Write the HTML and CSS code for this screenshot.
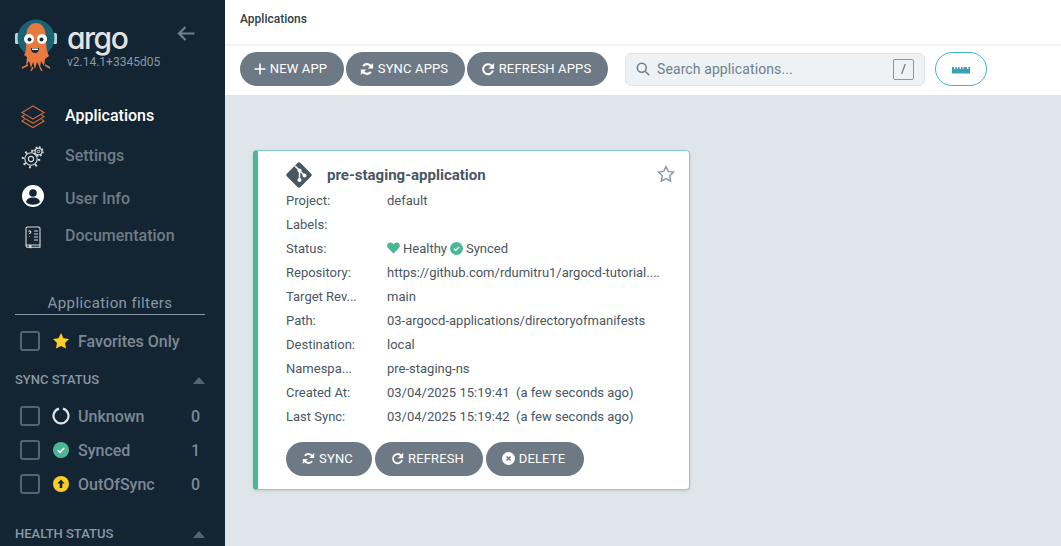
FILE: index.html
```html
<!DOCTYPE html>
<html lang="en">
<head>
  <meta charset="UTF-8" />
  <title>Applications - Argo CD</title>
  <link rel="stylesheet" href="styles.css">
</head>
<body>
  <svg class="sprites" width="0" height="0">
    <symbol id="sync" viewBox="0 0 16 16">
      <path d="M13.200 6.400A5.500 5.500 0 0 0 3.600 4.600" fill="none" stroke="currentColor" stroke-width="2.400"/>
      <path d="M15 1.200v6.200H8.800z" fill="currentColor"/>
      <path d="M2.800 9.600a5.500 5.500 0 0 0 9.600 1.800" fill="none" stroke="currentColor" stroke-width="2.400"/>
      <path d="M1 14.800V8.600h6.200z" fill="currentColor"/>
    </symbol>
    <symbol id="redo" viewBox="0 0 16 16">
      <path d="M12.400 4.400a5.700 5.700 0 1 0 1.200 5.400" fill="none" stroke="currentColor" stroke-width="2.200"/>
      <path d="M15 1v6.600H8.400z" fill="currentColor"/>
    </symbol>
    <symbol id="check" viewBox="0 0 16 16">
      <circle cx="8" cy="8" r="8" fill="#4bb893"/>
      <path d="M4.800 8.200l2.200 2.200 4.200-4.400" fill="none" stroke="#fff" stroke-width="1.600"/>
    </symbol>
  </svg>

  <div class="layout">
    <aside class="sidebar">
      <div class="brand">
        <svg class="logo" width="44" height="52" viewBox="0 0 44 52">
          <rect x="0" y="14" width="4" height="11" rx="1.500" fill="#b5d5e5"/>
          <rect x="38" y="14" width="4" height="11" rx="1.500" fill="#b5d5e5"/>
          <circle cx="21" cy="19" r="18.500" fill="#1b6274"/>
          <path d="M11 20C11 9 15 4 21 4s10 5 10 16c0 8 1 13 3 17l-4 3-1 7-3-5-1 7-3-6-2 7-2-7-2 6-2-7-3 5 1-9-3-2c3-4 2-9 2-16z" fill="#e9793f"/>
          <path d="M13 46l-6 3M30 46l5 3M18 48l-2 4M25 48l2 4" stroke="#e9793f" stroke-width="1.500" fill="none"/>
          <circle cx="14" cy="20" r="5" fill="#fff"/>
          <circle cx="27" cy="20" r="5" fill="#fff"/>
          <circle cx="14.500" cy="20.500" r="2" fill="#1c2b36"/>
          <circle cx="26.500" cy="20.500" r="2" fill="#1c2b36"/>
          <path d="M16 29h8c0 4-2 5-4 5s-4-1-4-5z" fill="#1c2b36"/>
          <path d="M17 29.500h6v1.500h-6z" fill="#fff"/>
        </svg>
        <div class="brand-text">
          <div class="wordmark">argo</div>
          <div class="version">v2.14.1+3345d05</div>
        </div>
        <svg class="collapse" width="18" height="15" viewBox="0 0 18 15">
          <path d="M17.500 7.500H2.500M8.500 1L2 7.500 8.500 14" fill="none" stroke="#6f7e8b" stroke-width="2.200"/>
        </svg>
      </div>

      <nav class="nav">
        <a class="nav-item nav-apps active">
          <svg width="26" height="26" viewBox="0 0 26 26" fill="none" stroke="#c8673a" stroke-width="1.200">
            <path d="M13 2l11 6.500L13 15 2 8.500z"/>
            <path d="M4.500 11L2 12.800 13 19.300l11-6.500L21.500 11"/>
            <path d="M4.500 15.300L2 17.100 13 23.600l11-6.500-2.500-1.800"/>
          </svg>
          <span>Applications</span>
        </a>
        <a class="nav-item nav-settings">
          <svg width="26" height="26" viewBox="0 0 26 26" fill="none" stroke="#d5dade">
            <circle cx="11" cy="15" r="6.200" stroke-width="1.100"/>
            <circle cx="11" cy="15" r="8" stroke-width="2.600" stroke-dasharray="1.800 4.480"/>
            <circle cx="11" cy="15" r="2.600" stroke-width="1.100"/>
            <circle cx="18.500" cy="7.500" r="3.400" fill="#132533" stroke-width="1.100"/>
            <circle cx="18.500" cy="7.500" r="4.400" stroke-width="1.600" stroke-dasharray="1.700 1.750"/>
            <circle cx="18.500" cy="7.500" r="1.300" stroke-width="1"/>
          </svg>
          <span>Settings</span>
        </a>
        <a class="nav-item nav-user">
          <svg width="24" height="24" viewBox="0 0 24 24">
            <circle cx="12" cy="12" r="11" fill="#fff"/>
            <circle cx="12" cy="9" r="3.800" fill="#132533"/>
            <path d="M5 18c1-3.500 3.500-4.500 7-4.500s6 1 7 4.500c-1.500 1.700-4 2.700-7 2.700s-5.500-1-7-2.700z" fill="#132533"/>
          </svg>
          <span>User Info</span>
        </a>
        <a class="nav-item nav-docs">
          <svg width="24" height="24" viewBox="0 0 24 24" fill="none" stroke="#d5dade" stroke-width="1.100">
            <path d="M5 20V3.500C5 2.700 5.700 2 6.500 2h11c.8 0 1.500.7 1.500 1.500V20zM5 20c0 1.500.7 2.300 1.800 2.300H19V20"/>
            <path d="M13 6h4M13 9h4M13 12h4M13 15h4M7.500 6.500c.6-1 2.500-.6 2.300.6-.1.800-1.200.9-1.200 2M8.600 11v.6"/>
            <path d="M8 20v3.500l1.200-.8 1.200.8V20" fill="#d5dade" stroke="none"/>
          </svg>
          <span>Documentation</span>
        </a>
      </nav>

      <section class="filters">
        <div class="filters-title">Application filters</div>
        <label class="filter-row fav-row">
          <span class="checkbox"></span>
          <svg width="18" height="18" viewBox="0 0 18 18"><path d="M9 1l2.500 5.200 5.500.8-4 4 1 5.600L9 14l-5 2.600 1-5.600-4-4 5.500-.8z" fill="#fccd28"/></svg>
          <span class="filter-label">Favorites Only</span>
        </label>

        <div class="filter-head sync-head"><span>SYNC STATUS</span><i class="caret"></i></div>
        <label class="filter-row">
          <span class="checkbox"></span>
          <svg width="18" height="18" viewBox="0 0 18 18"><path d="M7 1.600a7.500 7.500 0 1 0 4 0" fill="none" stroke="#dfe4e8" stroke-width="2.200"/></svg>
          <span class="filter-label">Unknown</span><span class="count">0</span>
        </label>
        <label class="filter-row">
          <span class="checkbox"></span>
          <svg width="16" height="16" class="status-ico"><use href="#check"/></svg>
          <span class="filter-label">Synced</span><span class="count">1</span>
        </label>
        <label class="filter-row">
          <span class="checkbox"></span>
          <svg width="16" height="16" viewBox="0 0 16 16" class="status-ico">
            <circle cx="8" cy="8" r="8" fill="#fccd28"/>
            <path d="M8 3.500l3.600 4H9.300V12H6.700V7.500H4.400z" fill="#132533"/>
          </svg>
          <span class="filter-label">OutOfSync</span><span class="count">0</span>
        </label>

        <div class="filter-head health-head"><span>HEALTH STATUS</span><i class="caret"></i></div>
      </section>
    </aside>

    <main class="main">
      <header class="topbar">Applications</header>
      <div class="toolbar">
        <div class="actions">
          <button class="btn btn-new">
            <svg width="12" height="12" viewBox="0 0 12 12"><path d="M6 .5v11M.5 6h11" stroke="currentColor" stroke-width="1.600"/></svg>
            NEW APP
          </button>
          <button class="btn btn-sync"><svg width="14" height="14"><use href="#sync"/></svg> SYNC APPS</button>
          <button class="btn btn-refresh"><svg width="14" height="14"><use href="#redo"/></svg> REFRESH APPS</button>
        </div>
        <div class="search">
          <svg width="14" height="14" viewBox="0 0 14 14" fill="none" stroke="#6d7f8b" stroke-width="1.500"><circle cx="5.800" cy="5.800" r="4.500"/><path d="M9.200 9.200l4 4"/></svg>
          <span class="search-text">Search applications...</span>
          <kbd class="shortcut">/</kbd>
        </div>
        <button class="view-btn">
          <svg width="18" height="8" viewBox="0 0 18 8"><path d="M0 1h2v2h1.300V1h1.500v1.500h1.300V1h1.500v2h1.300V1h1.500v1.500h1.300V1H15v2h1.300V1H18v6.500H0z" fill="#3f9fb5"/></svg>
        </button>
      </div>

      <div class="content">
        <article class="card">
          <div class="card-head">
            <svg class="git-icon" width="26" height="26" viewBox="0 0 26 26">
              <path d="M11.500 1L1 11.500a2.100 2.100 0 0 0 0 3L11.500 25a2.100 2.100 0 0 0 3 0L25 14.500a2.100 2.100 0 0 0 0-3L14.500 1a2.100 2.100 0 0 0-3 0z" fill="#495763"/>
              <path d="M9 4l4.500 4.500M13.500 8.500v9M13.500 8.500l5 5" stroke="#fff" stroke-width="1.500"/>
              <circle cx="13.500" cy="8.500" r="2" fill="#fff"/><circle cx="13.500" cy="18" r="2" fill="#fff"/><circle cx="18.500" cy="13.500" r="2" fill="#fff"/>
            </svg>
            <h3 class="card-title">pre-staging-application</h3>
            <svg class="star" width="18" height="18" viewBox="0 0 18 18"><path d="M9 1.500l2.300 4.900 5.200.7-3.800 3.700.9 5.300L9 13.500l-4.600 2.600.9-5.300L1.500 7.100l5.200-.7z" fill="none" stroke="#8b9ca8" stroke-width="1.500"/></svg>
          </div>
          <dl class="fields">
            <div class="field"><dt>Project:</dt><dd>default</dd></div>
            <div class="field"><dt>Labels:</dt><dd></dd></div>
            <div class="field"><dt>Status:</dt><dd class="status">
              <svg width="13" height="12" viewBox="0 0 13 12"><path d="M6.500 11.500L1 6C-.500 4.300 0 1.700 2 .800c1.700-.700 3.400 0 4.500 1.500C7.600.800 9.300.100 11 .800c2 .900 2.500 3.500 1 5.200z" fill="#4bb893"/></svg>
              Healthy
              <svg width="13" height="13"><use href="#check"/></svg>
              Synced
            </dd></div>
            <div class="field"><dt>Repository:</dt><dd>https://github.com/rdumitru1/argocd-tutorial....</dd></div>
            <div class="field"><dt>Target Rev...</dt><dd>main</dd></div>
            <div class="field"><dt>Path:</dt><dd>03-argocd-applications/directoryofmanifests</dd></div>
            <div class="field"><dt>Destination:</dt><dd>local</dd></div>
            <div class="field"><dt>Namespa...</dt><dd>pre-staging-ns</dd></div>
            <div class="field"><dt>Created At:</dt><dd>03/04/2025 15:19:41&nbsp; (a few seconds ago)</dd></div>
            <div class="field"><dt>Last Sync:</dt><dd>03/04/2025 15:19:42&nbsp; (a few seconds ago)</dd></div>
          </dl>
          <div class="card-actions">
            <button class="btn btn-card-sync"><svg width="13" height="13"><use href="#sync"/></svg> SYNC</button>
            <button class="btn btn-card-refresh"><svg width="13" height="13"><use href="#redo"/></svg> REFRESH</button>
            <button class="btn btn-card-delete">
              <svg width="13" height="13" viewBox="0 0 13 13"><circle cx="6.500" cy="6.500" r="6.500" fill="#fff"/><path d="M4.500 4.500l4 4M8.500 4.500l-4 4" stroke="#6d7a86" stroke-width="1.500"/></svg>
              DELETE
            </button>
          </div>
        </article>
      </div>
    </main>
  </div>
</body>
</html>
```

FILE: styles.css
```css
* { box-sizing: border-box; }
html, body { height: 100%; }
body { margin: 0; font-family: Roboto, "Liberation Sans", sans-serif; color: #495763; overflow: hidden; }
.sprites { position: absolute; }
.layout { display: flex; height: 546px; overflow: hidden; }

/* sidebar */
.sidebar { width: 225px; flex: none; background: #132533; color: #8b98a3; padding-top: 19px; overflow: hidden; }
.brand { display: flex; padding-left: 15px; height: 68px; }
.logo { flex: none; }
.brand-text { margin-left: 8px; width: 110px; flex: none; }
.wordmark { font-family: "Inter", sans-serif; font-feature-settings: "cv11"; font-size: 30px; line-height: 34px; font-weight: 500; letter-spacing: -1.500px; color: #e3e3e3; margin-top: 2px; }
.version { font-size: 12px; line-height: 14px; color: #8b98a3; margin-top: 0; }
.collapse { margin-top: 7px; flex: none; }

.nav { display: flex; flex-direction: column; margin-top: 8px; }
.nav-item { display: flex; align-items: center; padding-left: 20px; font-size: 16px; font-weight: 500; color: #6f7c87; }
.nav-item svg { width: 26px; flex: none; margin-right: 19px; }
.nav-apps { height: 40px; color: #fff; }
.nav-apps svg { margin-top: 3px; }
.nav-settings { height: 40px; }
.nav-settings svg { margin-top: 4px; }
.nav-user { height: 46px; }
.nav-user svg { margin-bottom: 4px; }
.nav-docs { height: 28px; }
.nav-docs svg { margin-top: 4px; }

.filters { padding: 0 20px 0 15px; margin-top: 45px; }
.filters-title { font-size: 15px; line-height: 18px; text-align: center; letter-spacing: .4px; color: #8b98a3; padding-bottom: 2px; border-bottom: 1px solid #8b98a3; }
.filter-row { display: flex; align-items: center; height: 34px; padding-left: 5px; font-size: 16px; font-weight: 500; color: #7c8994; }
.fav-row { margin-top: 9px; }
.checkbox { width: 20px; height: 20px; border: 2px solid #56636e; border-radius: 3px; flex: none; margin-right: 12px; }
.filter-row svg { flex: none; margin-right: 8px; }
.filter-row .status-ico { margin-left: 1px; margin-right: 9px; }
.filter-label { flex: 1; }
.count { margin-right: 5px; }
.filter-head { display: flex; justify-content: space-between; align-items: center; font-size: 13px; line-height: 16px; font-weight: 500; color: #8b98a3; }
.sync-head { margin-top: 14px; margin-bottom: 11px; }
.health-head { margin-top: 25px; }
.caret { width: 0; height: 0; border-left: 6px solid transparent; border-right: 6px solid transparent; border-bottom: 7px solid #56636e; }

/* main */
.main { flex: 1; display: flex; flex-direction: column; min-width: 0; }
.topbar { height: 46px; background: #fff; border-bottom: 2px solid #eef2f5; padding: 12px 15px 0; font-size: 12px; line-height: 14px; font-weight: 500; color: #2f3c47; }
.toolbar { display: flex; align-items: center; height: 49px; background: #fff; padding: 0 15px 3px; }
.actions { display: flex; gap: 2px; }
.btn { display: inline-flex; align-items: center; justify-content: center; gap: 4px; height: 34px; border: 0; border-radius: 17px; background: #6d7a86; color: #fff; font-family: inherit; font-size: 13px; letter-spacing: .15px; padding: 0 3px 1px 0; }
.btn-new { width: 104px; }
.btn-sync { width: 119px; }
.btn-refresh { width: 141px; }
.search { display: flex; align-items: center; width: 300px; height: 33px; margin-left: 17px; padding: 0 10px; background: #eef2f5; border: 1px solid #dee6eb; border-radius: 6px; color: #6d7f8b; }
.search-text { flex: 1; margin-left: 7px; font-size: 14px; letter-spacing: .1px; }
.shortcut { width: 21px; height: 21px; border: 1px solid #8b98a3; border-radius: 2px; font-family: inherit; font-size: 12px; line-height: 19px; text-align: center; color: #495763; }
.view-btn { width: 52px; height: 34px; margin-left: 10px; background: #fff; border: 1px solid #3fb5cd; border-radius: 17px; padding: 0; }

.content { flex: 1; background: #dee6eb; padding: 55px 28px 0; }
.card { width: 437px; height: 340px; background: #fff; border: 1px solid #8ccbcf; border-left: 5px solid #4bb893; border-radius: 4px; box-shadow: 0 1px 3px rgba(0, 0, 0, .12); padding: 11px 0 0 28px; }
.card-head { display: flex; align-items: center; height: 26px; }
.git-icon { flex: none; }
.card-title { flex: 1; margin: 0 0 0 15px; font-size: 15px; font-weight: 700; color: #495763; }
.star { margin-right: 14px; flex: none; margin-top: -2px; }
.fields { margin: 0; font-size: 13px; }
.field { display: flex; height: 24px; align-items: center; }
.field dt { width: 101px; flex: none; }
.field dd { margin: 0; }
.status { display: flex; align-items: center; gap: 3px; }
.card-actions { display: flex; gap: 3px; margin-top: 14px; }
.btn-card-sync { width: 86px; }
.btn-card-refresh { width: 108px; }
.btn-card-delete { width: 98px; }
```
